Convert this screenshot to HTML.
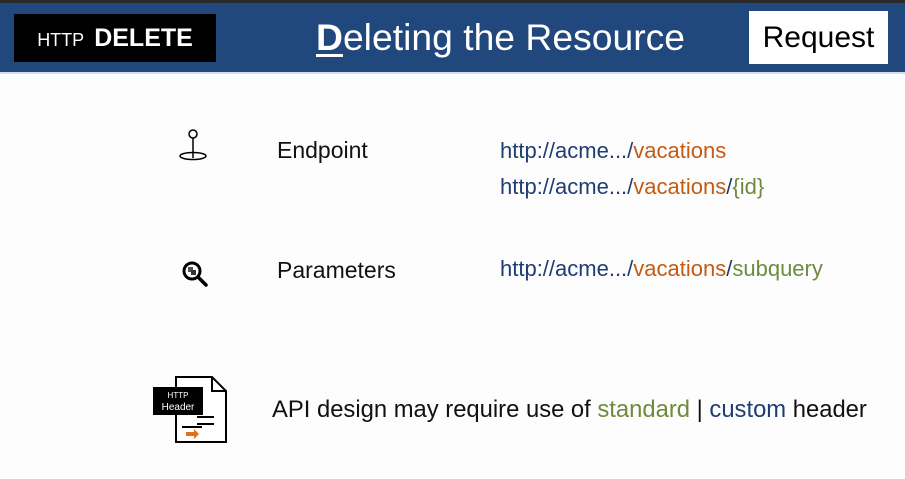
<!DOCTYPE html>
<html><head><style>
body{margin:0;width:905px;height:479px;background:#fdfdfd;position:relative;overflow:hidden;font-family:"Liberation Sans",sans-serif}
.a{position:absolute;white-space:nowrap;line-height:28px}
.b{color:#1f3d73}.o{color:#c55a11}.g{color:#6e8b3d}
.t{font-size:23px;color:#111}
.u{font-size:22px}
</style></head><body>
<div class="a" style="left:0;top:0;width:905px;height:3px;background:#2b2b2b"></div>
<div class="a" style="left:0;top:3px;width:905px;height:69px;background:#21487c"></div>
<div class="a" style="left:0;top:72px;width:905px;height:2px;background:#d6dde8"></div>
<div class="a" style="left:14px;top:14px;width:202px;height:48px;background:#000;color:#fff;line-height:48px;text-align:center;font-size:18px">HTTP&nbsp; <b style="font-size:25px">DELETE</b></div>
<div class="a" style="left:316px;top:14px;font-size:37.3px;color:#fff;line-height:46px"><u style="text-decoration-thickness:3px;text-underline-offset:4px;font-weight:bold">D</u>eleting the Resource</div>
<div class="a" style="left:749px;top:11px;width:139px;height:53px;background:#fff;color:#000;font-size:30px;line-height:53px;text-align:center">Request</div>

<svg class="a" style="left:178px;top:128px" width="30" height="34" viewBox="0 0 30 34"><circle cx="15" cy="6" r="4" fill="#fff" stroke="#000" stroke-width="1.5"/><line x1="15" y1="10" x2="15" y2="30" stroke="#000" stroke-width="1.5"/><ellipse cx="15" cy="28" rx="13" ry="3.5" fill="none" stroke="#000" stroke-width="1.5"/></svg>
<svg class="a" style="left:181px;top:260px" width="30" height="28" viewBox="0 0 30 28"><circle cx="11" cy="11" r="8" fill="#fff" stroke="#000" stroke-width="3"/><rect x="7" y="7" width="5" height="5" fill="#555"/><rect x="10" y="10" width="5" height="5" fill="#333"/><line x1="17" y1="17" x2="25" y2="25" stroke="#000" stroke-width="3.5" stroke-linecap="round"/></svg>

<div class="a t" style="left:277px;top:136px">Endpoint</div>
<div class="a t" style="left:277px;top:256px">Parameters</div>
<div class="a u" style="left:500px;top:137px"><span class="b">http://acme.../</span><span class="o">vacations</span></div>
<div class="a u" style="left:500px;top:173px"><span class="b">http://acme.../</span><span class="o">vacations</span><span class="b">/</span><span class="g">{id}</span></div>
<div class="a u" style="left:500px;top:255px"><span class="b">http://acme.../</span><span class="o">vacations</span><span class="b">/</span><span class="g">subquery</span></div>

<svg class="a" style="left:150px;top:375px" width="82" height="70" viewBox="0 0 82 70"><path d="M26 2H62L76 16V67H26Z" fill="#fff" stroke="#000" stroke-width="2"/><path d="M62 2V16H76" fill="none" stroke="#000" stroke-width="2"/><line x1="47" y1="42" x2="64" y2="42" stroke="#000" stroke-width="2"/><line x1="47" y1="49" x2="64" y2="49" stroke="#000" stroke-width="2"/><line x1="32" y1="52" x2="52" y2="52" stroke="#000" stroke-width="2"/><path d="M36 57h8v-3l5 5-5 5v-3h-8z" fill="#e07020"/><rect x="3" y="12" width="50" height="28" fill="#000"/><text x="28" y="23" fill="#fff" font-size="8" text-anchor="middle" font-family="Liberation Sans">HTTP</text><text x="28" y="35" fill="#fff" font-size="10" text-anchor="middle" font-family="Liberation Sans">Header</text></svg>

<div class="a" style="left:272px;top:396px;font-size:23.8px;color:#111">API design may require use of <span class="g">standard</span> | <span class="b">custom</span> header</div>
</body></html>
